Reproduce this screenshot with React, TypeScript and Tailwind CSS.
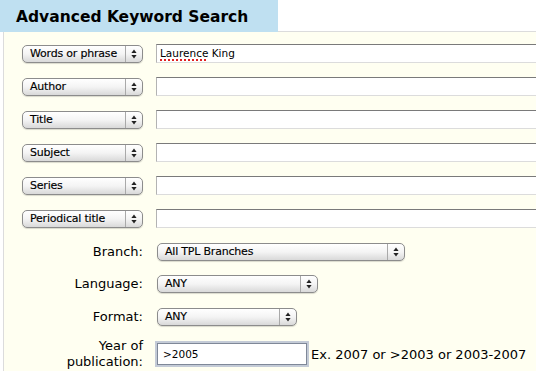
import React from "react";

function Arrows() {
  return (
    <svg width="6" height="10" viewBox="0 0 6 10" className="block">
      <path d="M3 0.5 L5.6 4 L0.4 4 Z" fill="#222" />
      <path d="M3 9.5 L5.6 6 L0.4 6 Z" fill="#222" />
    </svg>
  );
}

function PopUp({ label, width }: { label: string; width: string }) {
  return (
    <div
      className={`${width} h-[18px] flex items-stretch rounded-[5px] border border-[#8c8c8c] bg-gradient-to-b from-white via-[#f4f4f4] to-[#d9d9d9] shadow-[0_1px_1px_rgba(0,0,0,0.15)] shrink-0`}
    >
      <div className="flex-1 flex items-center pl-[7px] text-[11px] tracking-[-0.2px] leading-none text-black whitespace-nowrap overflow-hidden [-webkit-text-stroke:0.15px_#000]">
        {label}
      </div>
      <div className="w-[17px] flex items-center justify-center border-l border-[#a9a9a9]">
        <Arrows />
      </div>
    </div>
  );
}

function TextBox({ children }: { children?: React.ReactNode }) {
  return (
    <div className="w-[420px] h-[19px] shrink-0 bg-white border border-t-[#7a7a7a] border-x-[#b3b3b3] border-b-[#dcdcdc] flex items-center pl-[3px] text-[10.5px] leading-none text-black whitespace-nowrap">
      {children}
    </div>
  );
}

const fieldRows: { label: string; value?: React.ReactNode }[] = [
  {
    label: "Words or phrase",
    value: (
      <>
        <span className="underline decoration-dotted decoration-[#e02020] decoration-[1.5px] underline-offset-[2px]">
          Laurence
        </span>
        &nbsp;King
      </>
    ),
  },
  { label: "Author" },
  { label: "Title" },
  { label: "Subject" },
  { label: "Series" },
  { label: "Periodical title" },
];

export default function App() {
  return (
    <div className="w-[536px] h-[371px] bg-white overflow-hidden font-['DejaVu_Sans',Verdana,sans-serif] text-black">
      <div className="flex h-[32px]">
        <div className="w-[278px] bg-[#bfe0f1] pl-[16px] pt-[7px] text-[15.5px] font-bold leading-[20px]">
          Advanced Keyword Search
        </div>
        <div className="flex-1 border-b border-[#dcdcdc]" />
      </div>
      <div className="ml-[3px] h-[339px] border-l border-[#dcdcdc] bg-[#fffff1] pt-[12px] pl-[18px] overflow-hidden">
        <div className="flex flex-col gap-[14px]">
          {fieldRows.map((r) => (
            <div key={r.label} className="flex items-center gap-[13px] h-[19px]">
              <PopUp label={r.label} width="w-[121px]" />
              <TextBox>{r.value}</TextBox>
            </div>
          ))}
          <div className="flex items-center gap-[14px] h-[19px]">
            <div className="w-[121px] text-right text-[13px] leading-none">Branch:</div>
            <PopUp label="All TPL Branches" width="w-[248px]" />
          </div>
          <div className="flex items-center gap-[14px] h-[19px] -mt-[1px]">
            <div className="w-[121px] text-right text-[13px] leading-none">Language:</div>
            <PopUp label="ANY" width="w-[161px]" />
          </div>
          <div className="flex items-center gap-[14px] h-[19px]">
            <div className="w-[121px] text-right text-[13px] leading-none">Format:</div>
            <PopUp label="ANY" width="w-[140px]" />
          </div>
          <div className="flex items-center gap-[14px] -mt-[2px]">
            <div className="w-[121px] text-right text-[13px] leading-[16px]">
              Year of
              <br />
              publication:
            </div>
            <div className="w-[150px] h-[22px] shrink-0 bg-white border border-[#7f8898] shadow-[0_0_0_2px_#c4cbd7] flex items-center pl-[5px] text-[10.5px] leading-none">
              &gt;2005
            </div>
            <div className="text-[13px] leading-none whitespace-nowrap -ml-[10px]">
              Ex. 2007 or &gt;2003 or 2003-2007
            </div>
          </div>
        </div>
      </div>
    </div>
  );
}
